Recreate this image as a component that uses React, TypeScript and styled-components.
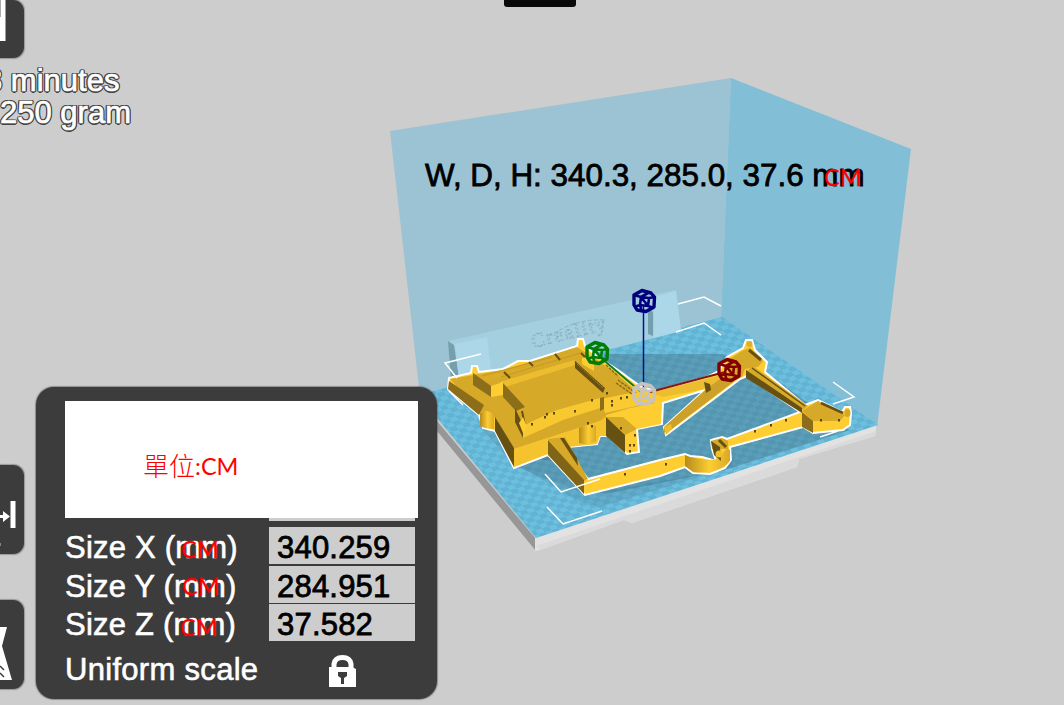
import React from "react";
import styled, { createGlobalStyle } from "styled-components";

const GlobalStyle = createGlobalStyle`
  body { margin: 0; background: #cdcdcd; overflow: hidden; }
  * { box-sizing: border-box; }
`;

const Screen = styled.main`
  position: relative;
  width: 1064px;
  height: 705px;
  overflow: hidden;
  background: #cdcdcd;
  font-family: "Liberation Sans", Arial, sans-serif;
  font-size: 31px;
`;

const Viewport = styled.svg`
  position: absolute;
  inset: 0;
  width: 1064px;
  height: 705px;
`;

const Overlay = styled.div`
  position: relative;
  display: grid;
  grid-template-columns: 36px 401px;
  grid-template-rows: 387px 312px;
`;

const JobInfo = styled.header`
  grid-column: 1 / 3;
  display: flex;
  flex-direction: column;
  align-items: flex-start;
`;

const ToolColumn = styled.nav`
  display: flex;
  flex-direction: column;
  gap: 46px;
  padding-top: 78px;
`;

const ToolButton = styled.div<{ $height: number }>`
  width: 24px;
  height: ${(p) => p.$height}px;
  background: #3c3c3c;
  border-radius: 0 11px 11px 0;
  box-shadow: 0 0 1px 0.5px rgba(70, 70, 70, 0.4);
  overflow: hidden;

  svg { display: block; }
`;

const Estimate = styled.p<{ $shift: number }>`
  margin: 0 0 0 ${(p) => p.$shift}px;
  height: 32px;
  line-height: 32px;
  white-space: pre;
  color: #fff;
  -webkit-text-stroke: 0.7px #fff;
  text-shadow:
    1.5px 0 #444, -1.5px 0 #444, 0 1.5px #444, 0 -1.5px #444,
    1.3px 1.3px #444, -1.3px 1.3px #444, 1.3px -1.3px #444, -1.3px -1.3px #444;
`;

const Estimates = styled.div`
  padding-top: 7px;
`;

const Panel = styled.section`
  background: #3c3c3c;
  border-radius: 18px;
  padding: 14px 0 0 29px;
  box-shadow: 0 0 1px 1px rgba(80, 80, 80, 0.5);
`;

const Notice = styled.div`
  width: 353px;
  height: 117px;
  padding: 12px 0 0 78px;
  display: flex;
  align-items: center;
  background: #fff;
  color: #f00;
  font-family: Lato, "Noto Sans CJK TC", sans-serif;
  font-size: 23.5px;
`;

const Han = styled.span`
  margin-top: -3px;
  font-family: "Noto Sans CJK TC", sans-serif;
  font-weight: 300;
  font-size: 26px;
`;

const FieldEdge = styled.div`
  width: 146px;
  height: 3px;
  margin-left: 204px;
  background: #cdcdcd;
`;

const Row = styled.div`
  position: relative;
  display: grid;
  grid-template-columns: 204px 146px;
  height: 38.5px;
  line-height: 42px;
  color: #fff;
  letter-spacing: 0.2px;
  -webkit-text-stroke: 0.6px currentColor;
`;

const Rows = styled.div`
  padding-top: 6px;
`;

const Field = styled.div`
  height: 37.3px;
  padding-left: 8px;
  background: #cdcdcd;
  color: #000;
  -webkit-text-stroke: 0.8px #000;
`;

const UnitTag = styled.span<{ $x: number; $y: number }>`
  position: absolute;
  left: ${(p) => p.$x}px;
  top: ${(p) => p.$y}px;
  color: #f00;
  font: 23.5px/24px Lato, sans-serif;
  letter-spacing: 0;
  -webkit-text-stroke: 0.3px #f00;
`;

const ScaleRow = styled.div`
  display: grid;
  grid-template-columns: 264px 26px;
  height: 42px;
  margin-top: 6px;
  line-height: 42px;
  letter-spacing: 0.3px;
  color: #fff;
  -webkit-text-stroke: 0.6px #fff;

  svg { margin-top: 6px; }
`;

const Dimensions = styled.div`
  position: absolute;
  left: 425px;
  top: 157px;
  width: 450px;
  line-height: 37px;
  font-size: 31.4px;
  white-space: nowrap;
  color: #000;
  -webkit-text-stroke: 0.8px #000;
`;

const Notch = styled.div`
  position: absolute;
  left: 504px;
  top: 0;
  width: 72px;
  height: 7px;
  border-radius: 0 0 3px 3px;
  background: #090909;
`;

const TOP = "#d6a929";
const LIT = "#fdcd32";
const SIDE = "#8c6d19";
const DARK = "#665112";

function Handle({ x, y, color }: { x: number; y: number; color: string }) {
  return (
    <g transform={`translate(${x} ${y})`} fill="none" stroke={color} strokeWidth="3.4" strokeLinejoin="round">
      <path d="M-2-10.500 7-8 10.500-4 10 6 2 10.500-7 9-10 4-10-6Z" />
      <path d="M-10-6-3-4 4-8 M-3-4-4 4-10 6 M-4 4 4 5 10 7 M4 5 5-3 11-4 M5-3-3-4 M-4 4-2 11 M-3-4 4 5" strokeWidth="2.6" />
    </g>
  );
}

function Scene() {
  const specks = [
    [592, 400], [575, 411], [554, 413], [547, 414], [532, 424], [545, 417], [612, 401], [612, 405], [621, 398],
    [627, 397], [607, 393], [588, 423], [592, 426], [621, 428], [630, 445], [634, 445], [630, 451], [635, 435],
    [625, 474], [666, 464], [755, 431], [771, 425], [786, 420], [821, 420], [839, 420],
  ];
  return (
    <Viewport viewBox="0 0 1064 705">
      <defs>
        <pattern id="tiles" width="2" height="2" patternUnits="userSpaceOnUse" patternTransform="matrix(6.6 -2 3.2 3.8 535 540)">
          <rect width="2" height="2" fill="#6dbfde" />
          <path d="M0 0H1V1H0ZM1 1H2V2H1Z" fill="#62b2d3" />
        </pattern>
        <linearGradient id="round" x1="0" x2="1">
          <stop offset="0" stopColor="#b58b1d" />
          <stop offset=".55" stopColor="#fdcd32" />
          <stop offset="1" stopColor="#d9a928" />
        </linearGradient>
      </defs>

      <path d="M390 131 731 78 721 318 420 396Z" fill="#9bc3d3" />
      <path d="M731 78 911 149 877 427 721 318Z" fill="#82bfd7" />

      <path d="M420 401 437 421 536 539 536 551 437 431 420 411Z" fill="#979797" />
      <path d="M535 538 877 424 875 436 799 459 797 467 632 523 624 520 540 550 535 551Z" fill="#e2e2e2" />
      <path d="M536 546 876 431 875 436 799 459 797 467 632 523 624 520 540 550Z" fill="#dadada" />
      <path d="M418 395 722 317 878 425 536 538Z" fill="url(#tiles)" />

      <path d="M448 341 676 290 681 331 460 388Z" fill="#a4cfdf" />
      <path d="M448 341 454 345 459 378 451 380Z" fill="#769fad" />
      <path d="M455 344 487 337 491 370 459 378Z" fill="#abd7e8" />
      <path d="M654 297 676 291 681 331 654 338Z" fill="#abd7e8" />
      <path d="M648 308 653 312 653 336 648 334Z" fill="#769fad" />
      <text x="533" y="348" transform="rotate(-14 533 348)" fontFamily="Liberation Serif, serif" fontSize="20" textLength="76" fill="#a6cddd" stroke="#7da8b8" strokeWidth=".7" strokeDasharray="2 2">Creality</text>
      <path d="M554 333Q580 318 606 320" fill="none" stroke="#8bb3c2" strokeDasharray="4 2" />

      <path d="M604 354H722L770 375 808 403 850 430 725 470 605 494 570 480 560 462 512 455 600 420Z" fill="#3a5f70" opacity=".34" />
      <path d="M478 425 512 462 560 490 575 500 600 507 732 467 735 456 700 474 585 495 548 455 514 468 495 431Z" fill="#3a6a80" opacity=".2" />
      <path d="M514 466 550 456 582 492 560 484Z" fill="#3a5f70" opacity=".2" />

      <path
        fillRule="evenodd"
        fill={LIT}
        stroke="#fff"
        strokeWidth="2"
        d="M449 378 471 373 472 366 477 366 479 372 503 369 518 361 530 361 555 353 577 346 578 339 583 339 585 346 598 357 618 370 640 386 655 391 707 377 719 371 727 357 743 348 746 340 752 340 755 350 767 362 765 372 805 405 818 400 842 412 845 407 850 407 851 413 850 425 843 430 813 433 803 427 730 447 731 460 725 468 710 474 693 473 685 467 660 476 585 495 548 455 514 468 495 431 483 428 479 415 448 389Z
        M568 447 597 444 600 436 608 436 627 454 639 452 637 429 662 424 663 403 705 390 664 427 666 435 740 379 747 376 800 412 727 439 722 437 711 440 712 449 716 461 702 457 690 456 685 454 660 460 588 479 575 463Z"
      />

      <path d="M450 379 503 370 530 362 577 347 597 360 617 374 639 394 658 405 606 417 600 421 514 449 495 418 479 411Z" fill={TOP} />
      <path d="M449 381 484 405 479 415 448 389Z" fill={SIDE} />
      <path d="M480 413Q487 408 494 415V429Q485 429 480 426Z" fill="url(#round)" />
      <path d="M495 417 514 448V467L495 431Z" fill={DARK} />
      <path d="M514 449 600 421 606 417V436H600L597 444 568 447 550 453 514 467Z" fill="#f5c32e" />
      <path d="M550 361 574 353 584 351 530 370 486 382 475 374 501 374Z" fill="#daac29" />
      <path d="M500 382 574 360 575 365 505 387Z" fill="#edbd30" />
      <path d="M501 377 580 353 M482 376 552 357" stroke="#c39825" fill="none" />
      <path d="M473 373 491 386V397L473 385Z" fill={SIDE} />
      <path d="M491 386 503 382V395L491 397Z" fill={LIT} />
      <path d="M503 383 525 407 516 411 503 397Z" fill={SIDE} />
      <path d="M515 408 523 425V438L515 422Z" fill={DARK} />
      <path d="M523 426 535 420 550 413 557 410 600 398V408L563 420 523 438Z" fill="#f8c831" />
      <path d="M575 361 605 388 603 393 575 368Z" fill={DARK} />
      <path d="M577 364 603 388" stroke="#a98422" strokeDasharray="2 1" />
      <path d="M582 358 594 355V371L582 364Z" fill={LIT} />
      <path d="M601 399 635 392 658 399 650 403 605 413Z" fill="#f9ca31" />
      <path d="M618 380 636 393 M616 383 632 394 M606 365 618 376" stroke={SIDE} strokeWidth="1.5" strokeDasharray="3 1" />
      <path d="M600 398 604 397 604 409 600 411Z" fill={SIDE} />
      <path d="M606 415 630 408 660 402 661 424 637 429 625 420 606 418Z" fill={LIT} />
      <path d="M606 417 623 417 637 429 625 435Z" fill={TOP} />
      <path d="M606 417 625 435V453L606 436Z" fill={DARK} />
      <path d="M579 428Q588 423 596 426V441Q588 446 579 443Z" fill="url(#round)" />
      <path d="M548 439 565 437 588 479 584 481Z" fill={TOP} />
      <path d="M560 438 564 438 577 458 578 466Z" fill={DARK} />
      <path d="M548 440 584 480V494L548 455Z" fill="#806517" />
      <path d="M504 372 510 378 M529 362 533 366 M555 354 560 360 M581 353 585 357 M522 411 525 426" stroke={DARK} strokeWidth="2" />
      <path d="M523 417 527 427 523 433 519 423Z" fill={LIT} />

      <path d="M649 393 707 379 720 375 739 365 740 375 705 389 663 397Z" fill="#edbd30" />
      <path d="M705 390 728 373 741 376 672 429 664 433 664 427Z" fill="#cda129" />
      <path d="M664 427 671 424 672 429 666 435Z" fill="#f0be2c" />
      <path d="M704 382 710 384 711 390 706 393Z" fill={DARK} />
      <path d="M728 360 742 351 750 348 763 361 758 367 745 369 742 377 730 378Z" fill={TOP} />
      <path d="M749 350 761 360" stroke={DARK} strokeWidth="3" />
      <circle cx="749.500" cy="344" r="3" fill="#dfb12b" />
      <path d="M747 371 753 366 808 406 801 411Z" fill={TOP} />
      <path d="M746 370 802 408V413L746 378Z" fill={DARK} />
      <path d="M752 368 805 406" stroke={DARK} strokeWidth="1.5" />
      <path d="M802 411 818 401 845 415 840 421 813 421Z" fill={TOP} />
      <path d="M802 412 813 421V433L802 427Z" fill={SIDE} />
      <path d="M821 403 843 413" stroke={DARK} strokeWidth="2.5" />
      <ellipse cx="847.500" cy="413" rx="3" ry="4" fill="#d5a728" />

      <path d="M685 455 690 457Q705 461 718 459L727 448 730 450 730 461Q718 475 693 472L685 466Z" fill="url(#round)" />
      <path d="M711 441 722 438 728 441 728 449 712 449Z" fill={TOP} />
      <path d="M711 441 720 447 721 461 714 455Z" fill={DARK} />
      <path d="M719 440 726 447" stroke={DARK} strokeWidth="3" />
      <circle cx="719" cy="454" r="3.500" fill="#eebf2f" />

      {specks.map(([x, y]) => (
        <rect key={`${x}-${y}`} x={x - 1} y={y - 1} width="2" height="2.500" fill="#5d480c" />
      ))}

      <g fill="none" stroke="#fff" strokeWidth="1.5">
        <path d="M481 354 445 363 457 378 M449 391 463 405" />
        <path d="M678 304 704 297 721 306 M676 332 704 323 721 335" />
        <path d="M833 382 854 397 833 404 M820 437 838 431" />
        <path d="M545 474 561 492 600 479 M547 507 563 524 602 511" />
      </g>

      <path d="M643.500 306V392" stroke="#00118e" strokeWidth="1.500" />
      <path d="M600 357 641 392" stroke="#087c2b" strokeWidth="1.700" />
      <path d="M650 392 725 372" stroke="#8a1509" strokeWidth="2" />
      <Handle x={644} y={394} color="#c8c4bd" />
      <Handle x={644} y={301} color="#00007e" />
      <Handle x={597} y={353} color="#007d09" />
      <Handle x={729} y={370} color="#820000" />
    </Viewport>
  );
}

const sizes = [
  { axis: "X", value: "340.259", x: 116, y: 10 },
  { axis: "Y", value: "284.951", x: 117, y: 8 },
  { axis: "Z", value: "37.582", x: 115, y: 11 },
];

export default function App() {
  return (
    <Screen>
      <GlobalStyle />
      <Scene />
      <Overlay>
        <JobInfo>
          <ToolButton $height={58}>
            <svg width="24" height="58">
              <path d="M0 0H5.500V41H0Z" fill="#fff" />
              <path d="M0 0H1V17H0Z" fill="#aaa" />
            </svg>
          </ToolButton>
          <Estimates>
            <Estimate $shift={-15}>8 minutes</Estimate>
            <Estimate $shift={0}>250 gram</Estimate>
          </Estimates>
        </JobInfo>
        <ToolColumn>
          <ToolButton $height={89}>
            <svg width="24" height="89">
              <path d="M0 50H3V46L10 51.500 3 57V53H0ZM10.500 36H15.500V63H10.500Z" fill="#fff" />
              <path d="M0 78V81" stroke="#ccc" />
            </svg>
          </ToolButton>
          <ToolButton $height={89}>
            <svg width="24" height="89">
              <path d="M0 27H7L2 46 12 80H0Z" fill="#fff" />
              <path d="M0 66 4 70 M0 73 4 77" stroke="#3c3c3c" strokeWidth="1.500" />
            </svg>
          </ToolButton>
        </ToolColumn>
        <Panel>
          <Notice>
            <Han>單位</Han>:CM
          </Notice>
          <FieldEdge />
          <Rows>
            {sizes.map((s) => (
              <Row key={s.axis}>
                <span>Size {s.axis} (mm)</span>
                <Field>{s.value}</Field>
                <UnitTag $x={s.x} $y={s.y}>CM</UnitTag>
              </Row>
            ))}
          </Rows>
          <ScaleRow>
            <span>Uniform scale</span>
            <svg width="27" height="33" viewBox="0 0 27 33">
              <path d="M5 14V9Q6 2.500 13.500 2.500T22 9V14" fill="none" stroke="#fff" strokeWidth="5" />
              <path d="M0 12H4L23 12 27 14V32H0Z" fill="#fff" />
              <path d="M9 17H18V21L15 23V29H12V23L9 21Z" fill="#3c3c3c" />
            </svg>
          </ScaleRow>
        </Panel>
      </Overlay>
      <Dimensions>
        W, D, H: 340.3, 285.0, 37.6 mm
        <UnitTag $x={399} $y={8}>CM</UnitTag>
      </Dimensions>
      <Notch />
    </Screen>
  );
}
